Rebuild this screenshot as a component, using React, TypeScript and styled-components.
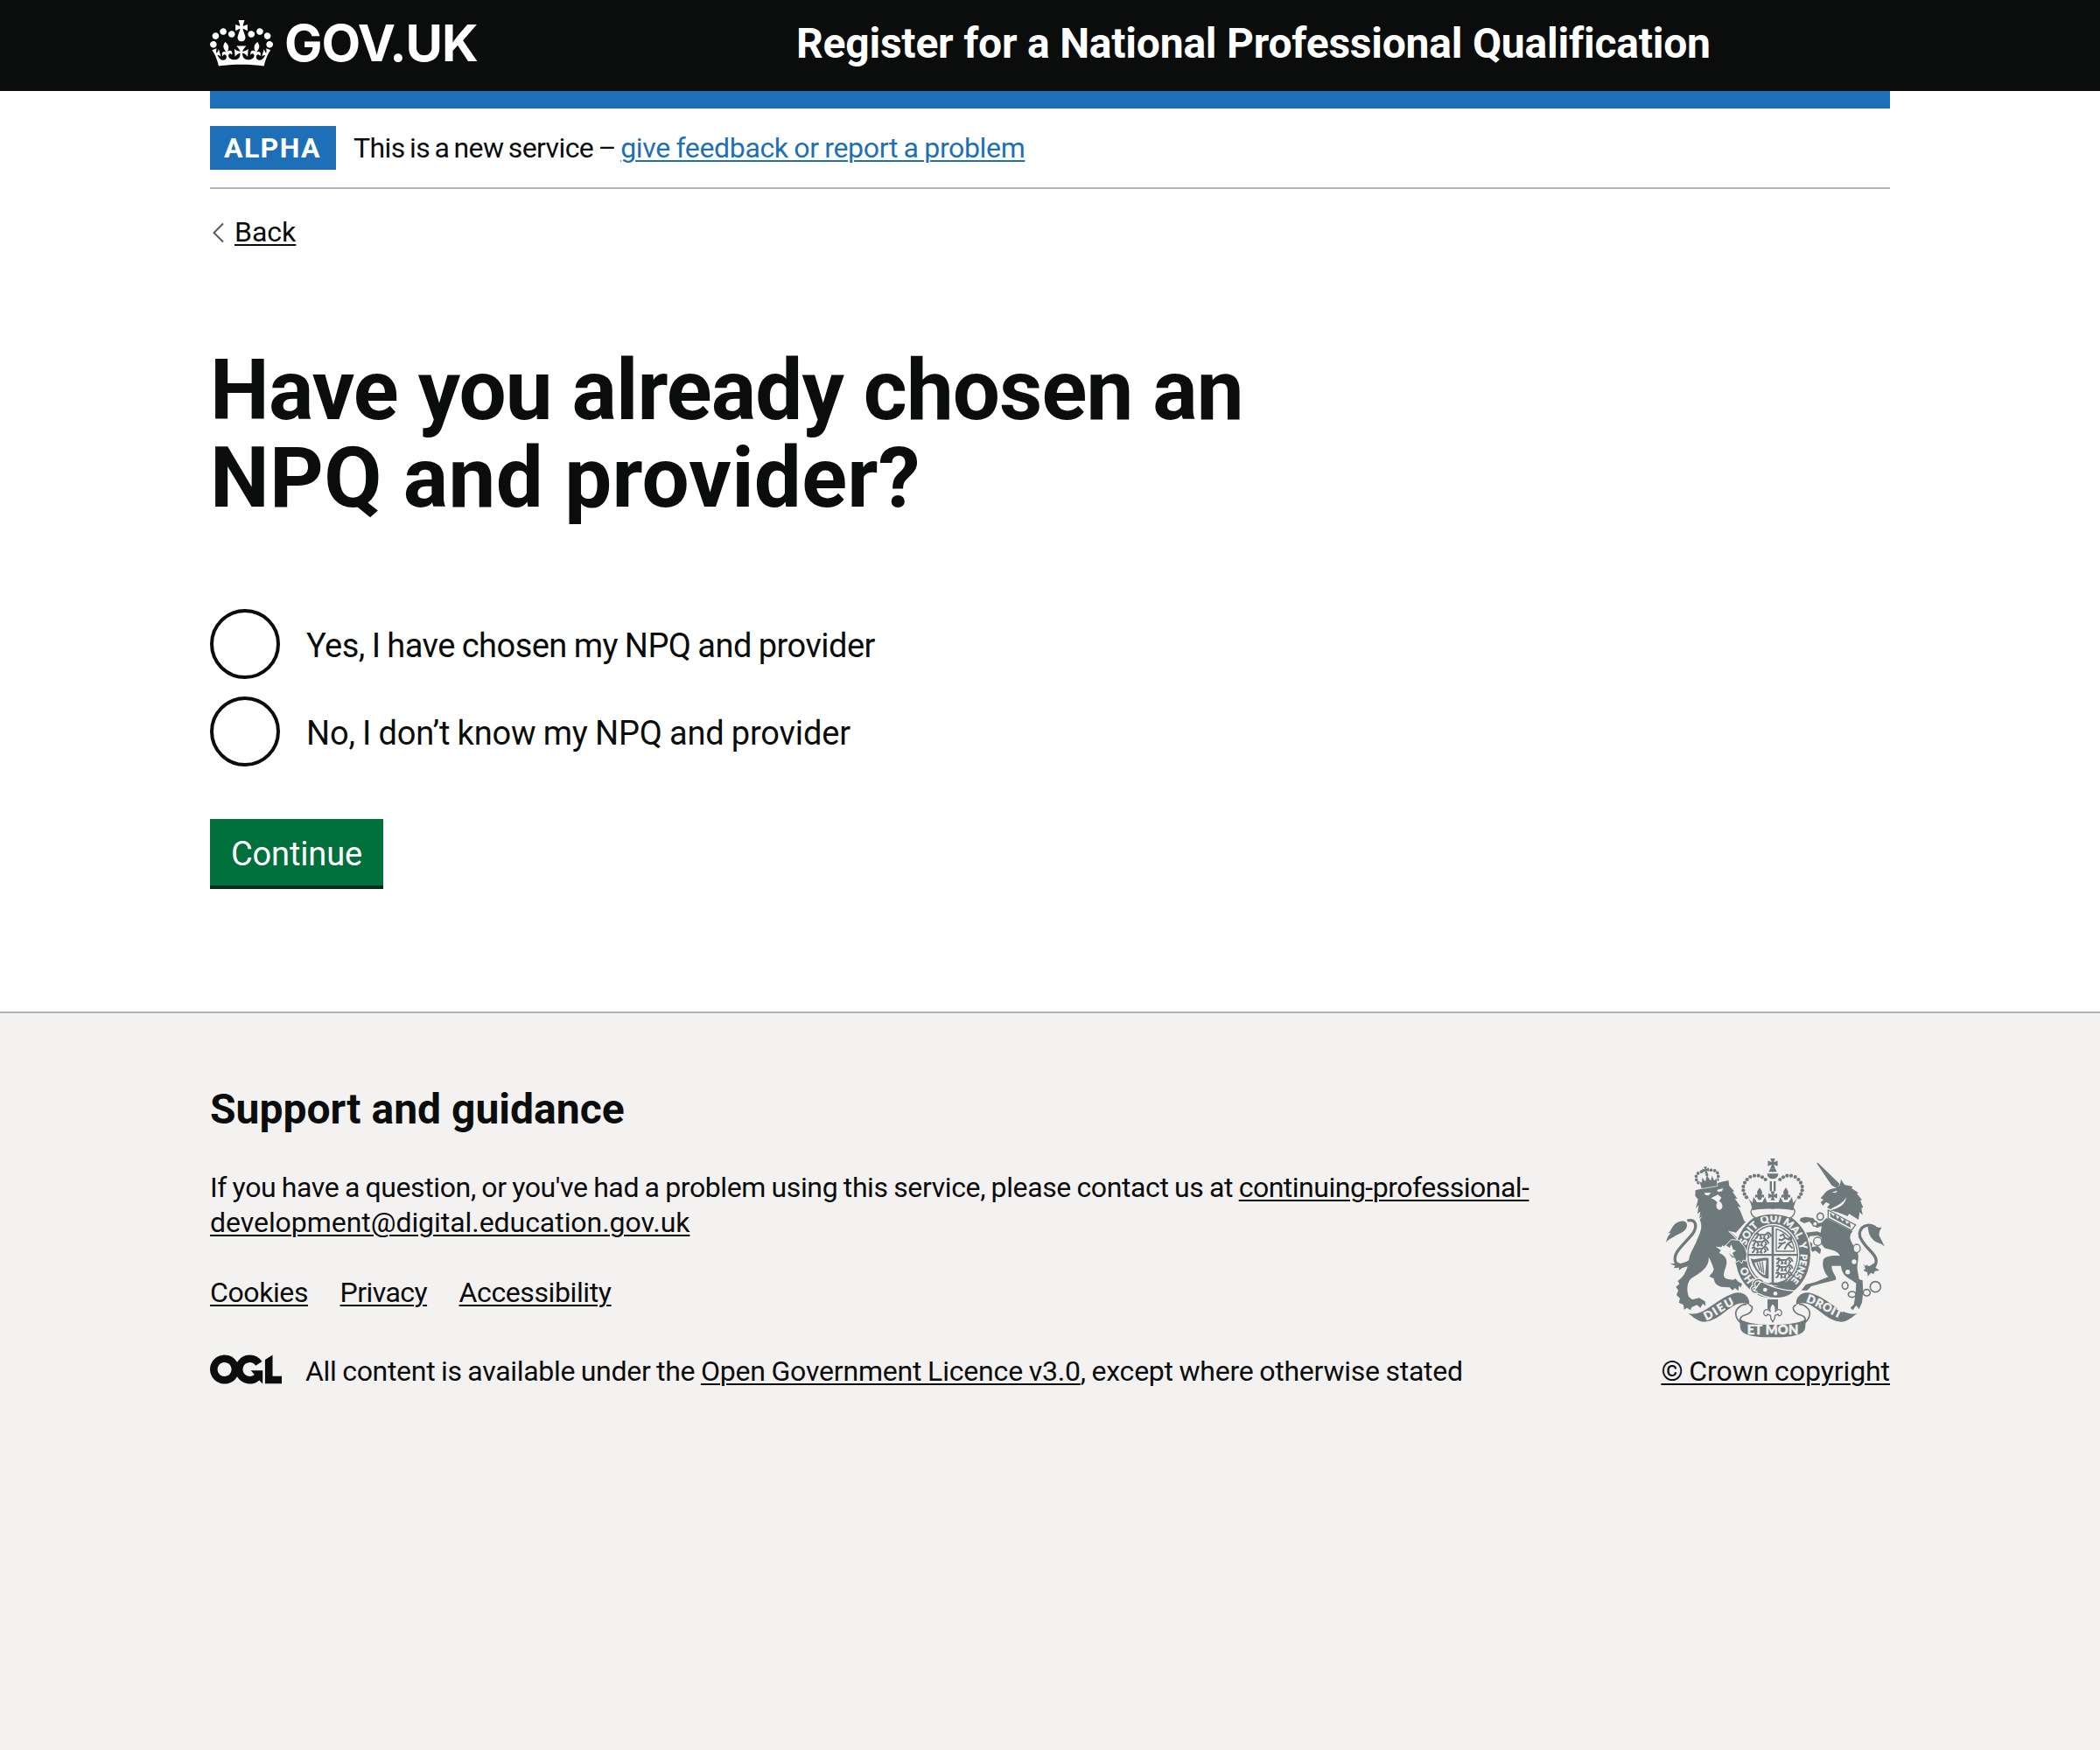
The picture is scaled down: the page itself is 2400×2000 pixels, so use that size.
import React from "react";
import styled, { createGlobalStyle } from "styled-components";

const ink = "#0b0c0c";
const blue = "#1d70b8";
const rule = "#b1b4b6";
const panel = "#f3f2f1";
const crest = "#6e797b";

const GlobalStyle = createGlobalStyle`
  body { margin: 0; background: #fff; color: ${ink}; font-family: Roboto, "Liberation Sans", sans-serif; }
  *, *::before, *::after { box-sizing: border-box; }
`;

const Page = styled.div`
  min-height: 2000px;
  display: flex;
  flex-direction: column;
`;
const Container = styled.div`
  width: 1920px;
  margin: 0 auto;
`;
const Header = styled.header`
  background: ${ink};
  color: #fff;
`;
const HeaderRow = styled(Container)`
  height: 104px;
  display: grid;
  grid-template-columns: 670px 1fr;
  align-items: start;
`;
const LogoLink = styled.a`
  display: flex;
  gap: 13px;
  color: #fff;
  text-decoration: none;
`;
const CrownIcon = styled.svg`
  width: 72px;
  height: 53px;
  margin-top: 23px;
  fill: currentColor;
`;
const Wordmark = styled.span`
  margin-top: 19px;
  font: 700 58px/60px Inter, sans-serif;
  letter-spacing: -1.1px;
`;
const Tracked = styled.span<{ $track?: number; $word?: number }>`
  letter-spacing: ${(p) => p.$track ?? 0}px;
  word-spacing: ${(p) => p.$word ?? 0}px;
  white-space: pre;
`;
const ServiceName = styled.div`
  margin-top: 20px;
  font-size: 48px;
  line-height: 60px;
  font-weight: 700;
`;
const BlueBar = styled(Container)`
  height: 20px;
  background: ${blue};
`;
const PhaseBanner = styled(Container)`
  display: flex;
  align-items: center;
  gap: 20px;
  padding: 20px 0;
  border-bottom: 2px solid ${rule};
  font-size: 32px;
  line-height: 40px;
`;
const Tag = styled.strong`
  width: 144px;
  height: 50px;
  padding: 5px 0 5px 16px;
  background: ${blue};
  color: #fff;
`;
const Link = styled.a<{ $track?: number; $word?: number; $color?: string }>`
  color: ${(p) => p.$color ?? ink};
  letter-spacing: ${(p) => p.$track ?? 0}px;
  word-spacing: ${(p) => p.$word ?? 0}px;
  text-decoration: underline;
  text-decoration-thickness: 2px;
  text-underline-offset: 3px;
`;
const BackRow = styled(Container)`
  display: flex;
  align-items: center;
  gap: 12px;
  margin-top: 29px;
  font-size: 32px;
  line-height: 40px;
`;
const Chevron = styled.svg`
  width: 13px;
  height: 24px;
  margin-top: 2px;
  margin-left: 3px;
  fill: none;
  stroke: #505a5f;
  stroke-width: 2;
`;
const Main = styled(Container).attrs({ as: "main" })`
  padding: 111px 0 144px;
`;
const Title = styled.h1`
  margin: 0 0 100px;
  font-size: 96px;
  line-height: 100px;
  font-weight: 700;
`;
const Radios = styled.div`
  display: flex;
  flex-direction: column;
  gap: 20px;
  margin-bottom: 60px;
`;
const RadioItem = styled.label`
  display: flex;
  align-items: flex-start;
  gap: 30px;
  height: 80px;
`;
const RadioDot = styled.span`
  width: 80px;
  height: 80px;
  border: 4px solid ${ink};
  border-radius: 50%;
`;
const RadioLabel = styled.span`
  padding-top: 17px;
  font-size: 38px;
  line-height: 50px;
`;
const Button = styled.button`
  display: block;
  width: 198px;
  height: 76px;
  padding: 3px 0 0 24px;
  border: 0;
  background: #00703c;
  box-shadow: 0 4px 0 #002d18;
  color: #fff;
  text-align: left;
  font: 400 38px/50px Roboto, sans-serif;
`;
const Footer = styled.footer`
  flex: 1;
  border-top: 2px solid ${rule};
  background: ${panel};
  font-size: 32px;
  line-height: 40px;
`;
const FooterRow = styled(Container)`
  display: flex;
  justify-content: space-between;
  align-items: flex-end;
  padding-top: 80px;
`;
const FooterTitle = styled.h2`
  margin: 0 0 39px;
  font-size: 48px;
  line-height: 60px;
`;
const Paragraph = styled.p`
  margin: 0 0 40px;
  white-space: nowrap;
`;
const FooterNav = styled.nav`
  display: flex;
  gap: 36.5px;
  margin-bottom: 50px;
`;
const Licence = styled.div`
  display: flex;
  gap: 27px;
  white-space: nowrap;
`;
const OglIcon = styled.svg`
  width: 82px;
  height: 34px;
  margin-top: 1px;
`;
const Copyright = styled.div`
  display: flex;
  flex-direction: column;
  align-items: center;
  gap: 19px;
  white-space: nowrap;
`;
const CrestIcon = styled.svg`
  width: 250px;
  height: 204px;
  overflow: visible;
`;

const Balls = ({ pts, r }: { pts: number[][]; r: number }) => (
  <>{pts.map(([x, y]) => <circle key={`${x}-${y}`} cx={x} cy={y} r={r} />)}</>
);

const archBalls = [[402, 136], [389, 131], [375, 131], [361, 135], [350, 144], [342, 155], [337, 168], [337, 181], [341, 194], [348, 205], [413, 144]];

const CrossPattee = ({ x, y, s }: { x: number; y: number; s: number }) => (
  <path transform={`translate(${x} ${y}) scale(${s})`} d="M-8-16H8L3-4 16-9V9L3 4 8 16H-8L-3 4-16 9V-9L-3-4Z" />
);

const HalfCrown = () => (
  <g>
    <Balls pts={archBalls} r={6.3} />
    <path d="M393 172C402 184 404 190 399 197 407 192 412 200 406 207L402 203 398 214H388L384 203 380 207C374 200 379 192 387 197 382 190 384 184 393 172Z" />
    <path d="M354 208L368 224 372 204 384 222 402 222 412 204 418 222H440V245C410 243 390 245 368 250 366 235 362 222 354 208Z" />
  </g>
);

const HalfRibbon = () => (
  <g>
    <path d="M148 603C170 607 185 603 200 595 235 575 268 545 305 534 340 525 362 550 357 574 345 566 325 566 310 574 270 596 245 632 200 632 180 630 165 615 148 603Z" />
    <path d="M357 574C375 580 368 597 352 605 340 611 322 610 327 634 312 622 305 600 318 586 328 576 340 571 348 572" fill={panel} stroke={crest} strokeWidth="5" />
  </g>
);

const Leopard = ({ x, y }: { x: number; y: number }) => (
  <path
    transform={`translate(${x} ${y})`}
    d="M2 4L10 0 16 6 38 5 46-2 54 2M12 6L8 16 2 18M20 8L24 17 18 20M36 8L32 17 38 20M46 4L50 13 44 19M54 2L58 12"
    fill="none"
    stroke={crest}
    strokeWidth="6"
  />
);

function RoyalArms() {
  return (
    <CrestIcon viewBox="72 72 750 612" fill={crest} aria-hidden="true">
      {/* lion */}
      <path d="M145 285C175 278 182 305 162 332 132 368 95 395 104 425 110 442 135 440 156 422" fill="none" stroke={crest} strokeWidth="10" />
      <path d="M72 360C77 340 80 335 90 328L80 328C92 318 90 306 106 294 124 281 146 285 144 303 142 326 108 332 98 341 88 347 78 350 72 360Z" />
      <path d="M104 418L112 436 160 420 152 440 128 447 116 456 117 446 98 448 104 440 86 433 102 432Z" />
      <path d="M173 181L192 176 196 171 262 152 286 147 289 166 306 184 300 186 317 210 308 209 329 239 318 237C330 255 335 275 341 288L346 288 312 326 288 320 322 348 344 372 350 398 346 420 336 418 334 431 322 420 312 428 308 414 298 414 302 402 295 396 300 386 288 384 284 370 276 374 266 370 262 376 242 374 260 386 254 396C276 404 284 420 278 440 272 462 262 478 282 485L302 488 310 484 320 494 333 502 328 514 322 508 320 526 308 516 300 524 290 514 262 512C246 508 238 500 236 484L220 476 232 462 236 452C230 436 226 420 218 412 222 448 182 468 158 484 144 496 142 524 150 546L162 556 186 550 206 562 208 578 198 570 190 584 178 574 160 582 156 592 144 584 134 590 132 574 116 566 120 552 108 540 114 524 106 512 118 502 112 492C134 478 146 452 150 424 152 396 170 376 178 352 192 322 198 304 188 282L196 268 186 278 190 254 180 262 184 232 174 244 182 212 172 200Z" />
      <g fill={panel}>
        <path d="M203 190L226 189 218 199 207 197ZM246 180L268 174 264 184 252 187Z" />
        <path d="M226 208L250 196 262 206 254 218C272 228 266 246 256 248 243 246 242 232 248 222L238 214Z" />
        <path d="M285 318L348 374 344 378 288 324Z" />
      </g>
      <g transform="rotate(-9 214 140)">
        <Balls pts={[[181, 150], [176, 139], [177, 127], [185, 118], [197, 114], [231, 114], [243, 118], [251, 127], [252, 139], [247, 150]]} r={5.6} />
        <CrossPattee x={213} y={111} s={0.72} />
        <path d="M184 144L192 150 197 132 205 148 214 126 223 148 232 132 236 150 246 144 244 172H188Z" stroke={panel} strokeWidth="2" />
        <circle cx="214" cy="128" r="5" />
      </g>
      {/* unicorn */}
      <path d="M588 87L594 88 668 160 658 174 640 164Z" />
      <path d="M672 144L684 162 712 168 708 174 732 190 726 192 744 214 738 216 748 240 742 242 746 266 736 256 732 282 700 262 694 270C670 258 650 254 634 250 660 244 688 232 690 204 680 228 650 236 636 246L624 240 634 228 620 222 610 234 602 222 612 214 602 208 614 194C622 184 630 176 654 174L668 164Z" />
      <path d="M640 188L660 182 654 190Z" fill={panel} />
      <path d="M628 249L722 300 708 318 628 276Z" fill={panel} stroke={crest} strokeWidth="4" />
      <path d="M636 272L634 256 646 270 652 262 660 280 668 270 676 288 686 278 690 296 702 290 706 310Z" />
      <path d="M622 276L712 322C694 340 706 360 726 386 738 410 726 428 728 452L734 486 746 490 748 530 744 566 734 588 724 576 712 592 704 584 716 572 722 536 724 500C700 480 676 478 672 440L640 440C640 466 660 476 654 488L600 502 570 510 556 524 536 524 552 504 584 496 628 478C612 460 606 436 612 418 622 404 650 404 668 406 664 390 640 384 618 380 604 368 600 356 606 344L592 336 566 338 558 352 574 364 572 376 592 372 604 384 600 400 584 388 574 392 564 376 554 376 546 344 536 334 550 326 590 322 602 326 606 304 590 310 574 300 564 288 546 294 530 286 534 276 550 272 576 276 592 294 606 292Z" />
      <path d="M790 308C752 285 722 322 742 350 762 388 804 404 790 436 784 450 768 450 756 440" fill="none" stroke={crest} strokeWidth="10" />
      <path d="M764 306C788 296 794 312 812 308 802 322 800 334 806 342L822 374C806 358 792 364 780 348 768 336 766 322 764 306Z" />
      <path d="M748 432L760 448 796 424 790 446 804 456 788 458 784 468 774 464 764 476 762 462 748 456 756 450Z" />
      <g fill="none" stroke={crest} strokeWidth="5">
        <ellipse cx="601" cy="271" rx="11" ry="12" />
        <ellipse cx="686" cy="508" rx="10" ry="12" />
        <ellipse cx="710" cy="538" rx="13" ry="10" />
        <ellipse cx="760" cy="532" rx="12" ry="11" />
        <circle cx="790" cy="512" r="18" />
      </g>
      <g fill={panel} stroke={crest} strokeWidth="4">
        <circle cx="583" cy="296" r="8" />
        <circle cx="592" cy="356" r="14" />
        <ellipse cx="726" cy="380" rx="12" ry="14" />
        <circle cx="717" cy="426" r="10" />
        <circle cx="695" cy="461" r="10" />
      </g>
      {/* garter */}
      <ellipse cx="438" cy="403" rx="133" ry="152" fill={panel} />
      <ellipse cx="438" cy="403" rx="129" ry="148" />
      <ellipse cx="438" cy="403" rx="91" ry="107" fill={panel} />
      <ellipse cx="438" cy="403" rx="85" ry="100" fill="none" stroke={crest} strokeWidth="4" />
      <path id="garter-line" d="M438 517A95 114 0 0 1 438 289 95 114 0 0 1 438 517" pathLength="100" fill="none" />
      <g fill={panel} stroke={panel} strokeWidth="1" fontFamily="Lato, sans-serif" fontWeight="900" fontSize="35" textAnchor="middle">
        <text><textPath href="#garter-line" startOffset="15">HO</textPath></text>
        <text><textPath href="#garter-line" startOffset="36">SOIT</textPath></text>
        <text><textPath href="#garter-line" startOffset="49">QUI</textPath></text>
        <text><textPath href="#garter-line" startOffset="61">MAL</textPath></text>
        <text><textPath href="#garter-line" startOffset="70.5">Y</textPath></text>
        <text fontSize="32"><textPath href="#garter-line" startOffset="82">PENSE</textPath></text>
      </g>
      {/* shield quarters */}
      <path d="M434 305H442V399H522V406H442V500H434V406H354V399H434Z" />
      <Leopard x={375} y={328} />
      <Leopard x={366} y={352} />
      <Leopard x={364} y={376} />
      <path d="M450 314V390H512C512 362 492 326 450 314Z" fill="none" stroke={crest} strokeWidth="4" />
      <path d="M462 338L474 332 480 344 494 350 500 340 502 356 490 364 506 380M480 344L470 352 458 350M482 358L468 366 456 380M488 366L478 384M458 362L470 364" fill="none" stroke={crest} strokeWidth="6" />
      <path d="M362 414C375 424 400 408 424 414V484C402 484 372 456 362 414Z" />
      <path d="M376 428C390 430 404 420 416 422L412 472C396 468 380 450 376 428Z" fill={panel} />
      <path d="M384 428L394 456M393 427L401 462M402 425L407 466" stroke={crest} strokeWidth="4" />
      <Leopard x={448} y={414} />
      <Leopard x={448} y={438} />
      <Leopard x={446} y={462} />
      <path d="M425 497H455L492 485 470 508H440Z" />
      {/* lion's paw over the garter */}
      <path d="M270 376L296 350 322 352 342 376 350 400 346 424 336 420 332 432 322 422 312 428 308 414 298 412Z" stroke={panel} strokeWidth="3" />
      <path d="M276 368L290 378 296 366 302 384 312 388 300 396 306 410 290 398 268 384Z" fill={panel} />
      {/* belt and buckle */}
      <path d="M398 492C430 512 470 524 514 526 492 550 452 558 410 544L372 528Z" stroke={panel} strokeWidth="4" />
      <g fill={panel}>
        <circle cx="412" cy="522" r="7" />
        <circle cx="447" cy="535" r="7" />
      </g>
      <path d="M404 494C388 480 366 492 374 510 358 514 366 534 386 530" fill="none" stroke={panel} strokeWidth="12" />
      <path d="M404 494C388 480 366 492 374 510 358 514 366 534 386 530" fill="none" stroke={crest} strokeWidth="4" />
      {/* crown */}
      <path d="M372 240H504C524 250 508 272 496 276 460 262 416 262 380 276 364 268 356 252 372 240Z" fill={panel} stroke={crest} strokeWidth="4" />
      <HalfCrown />
      <g transform="matrix(-1 0 0 1 876 0)"><HalfCrown /></g>
      <CrossPattee x={438} y={89} s={1.05} />
      <path d="M424 118L430 106H446L452 118ZM419 124H457C457 148 419 148 419 124ZM428 150H435V184H428ZM441 150H448V184H441Z" />
      <CrossPattee x={438} y={200} s={0.95} />
      {/* motto ribbon */}
      <HalfRibbon />
      <g transform="matrix(-1 0 0 1 876 0)"><HalfRibbon /></g>
      <path d="M324 622C350 640 400 642 438 642 476 642 526 640 552 622L549 654C544 680 496 685 438 685 380 685 332 680 327 654Z" />
      <path id="motto-left" d="M210 627C245 615 275 582 330 564" fill="none" />
      <path id="motto-right" d="M551 564C590 574 630 606 690 630" fill="none" />
      <g fill={panel} stroke={panel} strokeWidth="1.4" fontFamily="Lato, sans-serif" fontWeight="900" fontSize="39">
        <text><textPath href="#motto-left" textLength="112">DIEU</textPath></text>
        <text><textPath href="#motto-right" textLength="130">DROIT</textPath></text>
        <text x="350" y="676" fontSize="44" textLength="176">ET MON</text>
      </g>
      {/* fleur-de-lis pendant */}
      <path d="M420 555H456V590H420Z" />
      <path d="M438 568C450 580 450 588 446 598 456 584 472 590 468 606 464 614 456 612 456 606L446 610 444 622 438 632 432 622 430 610 420 606C420 612 412 614 408 606 404 590 420 584 430 598 426 588 426 580 438 568Z" fill={panel} stroke={crest} strokeWidth="4" />
    </CrestIcon>
  );
}

export default function App() {
  return (
    <Page>
      <GlobalStyle />
      <Header>
        <HeaderRow>
          <LogoLink>
            <CrownIcon viewBox="0 0 132 97">
              <path fillRule="evenodd" d="M25 30.2c3.5 1.5 7.7-.2 9.1-3.7 1.5-3.6-.2-7.8-3.9-9.2-3.6-1.4-7.6.3-9.1 3.9-1.4 3.5.3 7.5 3.9 9zM9 39.5c3.6 1.5 7.8-.2 9.2-3.7 1.5-3.6-.2-7.8-3.9-9.1-3.6-1.5-7.6.2-9.1 3.8-1.4 3.5.3 7.5 3.8 9zM4.4 57.2c3.5 1.5 7.7-.2 9.1-3.8 1.5-3.6-.2-7.7-3.9-9.1-3.5-1.5-7.6.3-9.1 3.8-1.4 3.5.3 7.6 3.9 9.1zm38.3-21.4c3.5 1.5 7.7-.2 9.1-3.8 1.5-3.6-.2-7.7-3.9-9.1-3.6-1.5-7.6.3-9.1 3.8-1.3 3.6.4 7.7 3.9 9.1zm64.4-5.6c-3.6 1.5-7.8-.2-9.1-3.7-1.5-3.6.2-7.8 3.8-9.2 3.6-1.4 7.7.3 9.2 3.9 1.3 3.5-.4 7.5-3.9 9zm15.9 9.3c-3.6 1.5-7.7-.2-9.1-3.7-1.5-3.6.2-7.8 3.7-9.1 3.6-1.5 7.7.2 9.2 3.8 1.5 3.5-.3 7.5-3.8 9zm4.7 17.7c-3.6 1.5-7.8-.2-9.2-3.8-1.5-3.6.2-7.7 3.9-9.1 3.6-1.5 7.7.3 9.2 3.8 1.3 3.5-.4 7.6-3.9 9.1zM89.3 35.8c-3.6 1.5-7.8-.2-9.2-3.8-1.4-3.6.2-7.7 3.9-9.1 3.6-1.5 7.7.3 9.2 3.8 1.4 3.6-.3 7.7-3.9 9.1zM69.7 17.7l8.9 4.7V9.3l-8.9 2.8c-.2-.3-.5-.6-.9-.9L72.4 0H59.6l3.5 11.2c-.3.3-.6.5-.9.9l-8.8-2.8v13.1l8.8-4.7c.3.3.6.7.9.9l-5 15.4v.1c-.2.8-.4 1.6-.4 2.4 0 4.1 3.1 7.5 7 8.1h.2c.3 0 .7.1 1 .1.4 0 .7 0 1-.1h.2c4-.6 7.1-4.1 7.1-8.1 0-.8-.1-1.7-.4-2.4V34l-5.1-15.4c.4-.2.7-.6 1-.9zM66 92.8c16.9 0 32.8 1.1 47.1 3.2 4-16.9 8.9-26.7 14-33.5l-9.6-3.4c1 4.9 1.1 7.2 0 10.2-1.5-1.4-3-4.3-4.2-8.7L108.6 76c2.8-2 5-3.2 7.5-3.3-4.4 9.4-10 11.9-13.6 11.2-4.3-.8-6.3-4.6-5.6-7.9 1-4.7 5.7-5.9 8-.5 4.3-8.7-3-11.4-7.6-8.8 7.1-7.2 7.9-13.5 2.1-21.1-8 6.1-8.1 12.3-4.5 20.8-4.7-5.4-12.1-2.5-9.5 6.2 3.4-5.2 7.9-2 7.2 3.1-.6 4.3-6.4 7.8-13.5 7.2-10.3-.9-10.9-8-11.2-13.8 2.5-.5 7.1 1.8 11 7.3L80.2 60c-4.1 4.4-8 5.3-12.3 5.4 1.4-4.4 8-11.6 8-11.6H55.5s6.4 7.2 7.9 11.6c-4.2-.1-8-1-12.3-5.4l1.4 16.4c3.9-5.5 8.5-7.7 10.9-7.3-.3 5.8-.9 12.8-11.1 13.8-7.2.6-12.9-2.9-13.5-7.2-.7-5 3.8-8.3 7.1-3.1 2.7-8.7-4.6-11.6-9.4-6.2 3.7-8.5 3.6-14.7-4.6-20.8-5.8 7.6-5 13.9 2.2 21.1-4.7-2.6-11.9.1-7.7 8.8 2.3-5.5 7.1-4.2 8.1.5.7 3.3-1.3 7.1-5.7 7.9-3.5.7-9-1.8-13.5-11.2 2.5.1 4.7 1.3 7.5 3.3l-4.7-15.4c-1.2 4.4-2.7 7.2-4.3 8.7-1.1-3-.9-5.3 0-10.2l-9.5 3.4c5 6.9 9.9 16.7 14 33.5 14.8-2.1 30.8-3.2 47.7-3.2z" />
            </CrownIcon>
            <Wordmark>GOV.UK</Wordmark>
          </LogoLink>
          <ServiceName><Tracked $track={-0.22}>Register for a National Professional Qualification</Tracked></ServiceName>
        </HeaderRow>
      </Header>
      <BlueBar />
      <PhaseBanner>
        <Tag><Tracked $track={1.4}>ALPHA</Tracked></Tag>
        <span>
          <Tracked $track={-0.6} $word={-2}>This is a new service – </Tracked>
          <Link $color={blue} $track={-0.35} $word={-1}>give feedback or report a problem</Link>
        </span>
      </PhaseBanner>
      <BackRow>
        <Chevron viewBox="0 0 13 24"><path d="M12 1.5L1.5 12 12 22.5" /></Chevron>
        <Link>Back</Link>
      </BackRow>
      <Main>
        <Title>
          <Tracked $track={-0.9}>Have you already chosen an</Tracked>
          <br />
          <Tracked $track={0.3}>NPQ and provider?</Tracked>
        </Title>
        <Radios>
          <RadioItem><RadioDot /><RadioLabel><Tracked $track={-0.53} $word={-1}>Yes, I have chosen my NPQ and provider</Tracked></RadioLabel></RadioItem>
          <RadioItem><RadioDot /><RadioLabel><Tracked $track={-0.16} $word={-1}>No, I don’t know my NPQ and provider</Tracked></RadioLabel></RadioItem>
        </Radios>
        <Button><Tracked $track={-0.15}>Continue</Tracked></Button>
      </Main>
      <Footer>
        <FooterRow>
          <div>
            <FooterTitle>Support and guidance</FooterTitle>
            <Paragraph>
              <Tracked $track={-0.384} $word={-1}>{"If you have a question, or you've had a problem using this service, please contact us at "}</Tracked>
              <Link $track={-0.5}>continuing-professional-</Link>
              <br />
              <Link $track={-0.05}>development@digital.education.gov.uk</Link>
            </Paragraph>
            <FooterNav>
              <Link $track={-0.4}>Cookies</Link>
              <Link $track={-0.55}>Privacy</Link>
              <Link $track={-0.39}>Accessibility</Link>
            </FooterNav>
            <Licence>
              <OglIcon viewBox="0 0 483.2 195.7" fill={ink}>
                <path d="M421.5 142.8V.1l-50.7 32.3v161.1h112.4v-50.7zm-122.3-9.6A47.12 47.12 0 0 1 221 97.8c0-26 21.1-47.1 47.1-47.1 16.7 0 31.4 8.7 39.7 21.8l42.7-27.2A97.63 97.63 0 0 0 268.1 0c-36.5 0-68.3 20.1-85.1 49.7A98 98 0 0 0 97.8 0C43.9 0 0 43.9 0 97.8s43.9 97.8 97.8 97.8c36.5 0 68.3-20.1 85.1-49.7a97.76 97.76 0 0 0 149.6 25.4l19.4 22.2h3v-87.8h-80l24.3 27.5zM97.8 145c-26 0-47.1-21.1-47.1-47.1s21.1-47.1 47.1-47.1 47.1 21.1 47.1 47.1S123.8 145 97.8 145" />
              </OglIcon>
              <span>
                <Tracked $track={-0.3} $word={-1}>{"All content is available under the "}</Tracked>
                <Link $track={-0.19} $word={-1}>Open Government Licence v3.0</Link>
                <Tracked $track={-0.24} $word={-1}>, except where otherwise stated</Tracked>
              </span>
            </Licence>
          </div>
          <Copyright>
            <RoyalArms />
            <Link $track={-0.08} $word={-1}>© Crown copyright</Link>
          </Copyright>
        </FooterRow>
      </Footer>
    </Page>
  );
}
